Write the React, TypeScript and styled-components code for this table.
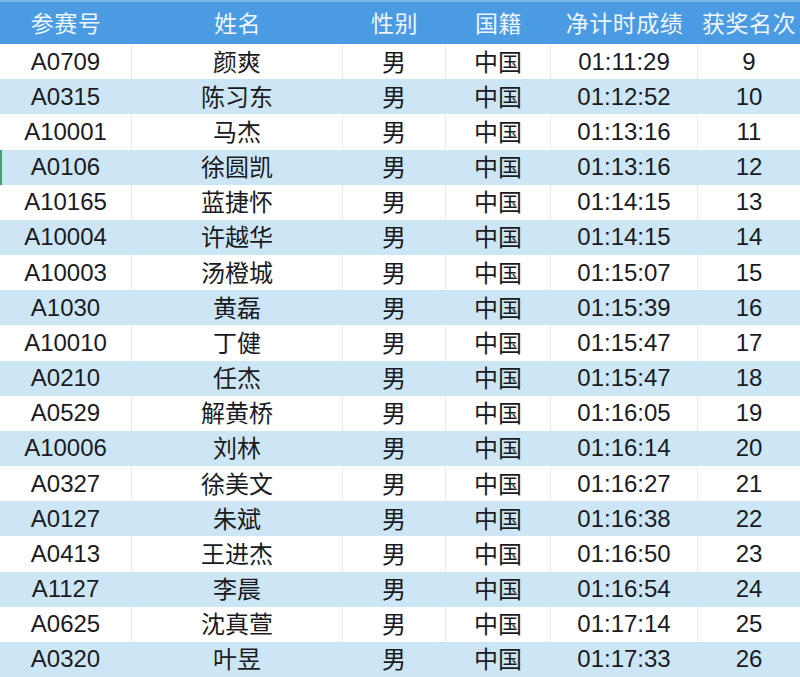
import React from 'react'
import styled, { createGlobalStyle } from 'styled-components'

const GlobalStyle = createGlobalStyle`
  html, body {
    margin: 0;
    padding: 0;
    background: #ffffff;
  }
  body {
    font-family: "Liberation Sans", Arial, "Noto Sans CJK SC", sans-serif;
  }
`

const COLS = '132px 211px 103px 105px 147px 1fr'

const Table = styled.div`
  width: 800px;
  height: 677px;
  display: grid;
  grid-template-rows: 44px repeat(18, minmax(0, 1fr));
  overflow: hidden;
`

const HeaderRow = styled.div`
  display: grid;
  grid-template-columns: ${COLS};
  background: #4a9be2;
  border-top: 2px solid #7cb8ec;
  box-sizing: border-box;
`

const HeaderCell = styled.div`
  display: flex;
  align-items: center;
  justify-content: center;
  line-height: 1;
  padding-bottom: 2px;
  color: #eef6fd;
  font-size: 23px;
  letter-spacing: 0.5px;
  font-family: "Noto Sans CJK SC", sans-serif;
  font-weight: 400;
`

const Row = styled.div<{ $striped: boolean; $marked?: boolean }>`
  display: grid;
  grid-template-columns: ${COLS};
  min-height: 0;
  background: ${({ $striped }) => ($striped ? '#cde6f6' : '#ffffff')};
  box-shadow: ${({ $marked }) => ($marked ? 'inset 2px 0 0 #3aa37a' : 'none')};
`

const Cell = styled.div<{ $striped: boolean; $cjk?: boolean }>`
  display: flex;
  align-items: center;
  justify-content: center;
  line-height: 1;
  min-height: 0;
  padding-bottom: ${({ $cjk }) => ($cjk ? '2px' : '0')};
  color: #1b1b1f;
  font-size: 24px;
  font-family: ${({ $cjk }) =>
    $cjk
      ? '"Noto Sans CJK SC", sans-serif'
      : '"Liberation Sans", Arial, "Noto Sans CJK SC", sans-serif'};
  border-right: 1px solid ${({ $striped }) => ($striped ? '#cde6f6' : '#e9eaec')};
  &:last-child {
    border-right: none;
  }
`

const headers = ['参赛号', '姓名', '性别', '国籍', '净计时成绩', '获奖名次']

const rows: [string, string, string][] = [
  ['A0709', '颜爽', '01:11:29'],
  ['A0315', '陈习东', '01:12:52'],
  ['A10001', '马杰', '01:13:16'],
  ['A0106', '徐圆凯', '01:13:16'],
  ['A10165', '蓝捷怀', '01:14:15'],
  ['A10004', '许越华', '01:14:15'],
  ['A10003', '汤橙城', '01:15:07'],
  ['A1030', '黄磊', '01:15:39'],
  ['A10010', '丁健', '01:15:47'],
  ['A0210', '任杰', '01:15:47'],
  ['A0529', '解黄桥', '01:16:05'],
  ['A10006', '刘林', '01:16:14'],
  ['A0327', '徐美文', '01:16:27'],
  ['A0127', '朱斌', '01:16:38'],
  ['A0413', '王进杰', '01:16:50'],
  ['A1127', '李晨', '01:16:54'],
  ['A0625', '沈真萱', '01:17:14'],
  ['A0320', '叶昱', '01:17:33'],
]

export default function App() {
  return (
    <>
      <GlobalStyle />
      <Table>
        <HeaderRow>
          {headers.map((h) => (
            <HeaderCell key={h}>{h}</HeaderCell>
          ))}
        </HeaderRow>
        {rows.map(([id, name, time], i) => {
          const striped = i % 2 === 1
          return (
            <Row key={id} $striped={striped} $marked={i === 3}>
              <Cell $striped={striped}>{id}</Cell>
              <Cell $striped={striped} $cjk>{name}</Cell>
              <Cell $striped={striped} $cjk>男</Cell>
              <Cell $striped={striped} $cjk>中国</Cell>
              <Cell $striped={striped}>{time}</Cell>
              <Cell $striped={striped}>{i + 9}</Cell>
            </Row>
          )
        })}
      </Table>
    </>
  )
}
